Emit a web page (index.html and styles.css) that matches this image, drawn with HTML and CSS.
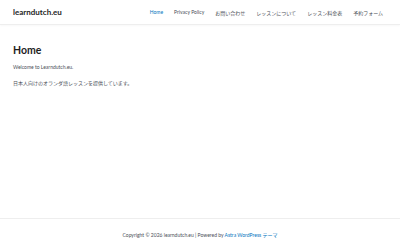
FILE: index.html
```html
<!DOCTYPE HTML>
<html lang="ja">
<head>
  <meta charset="utf-8">
  <title>learndutch.eu</title>
  <link rel="stylesheet" href="styles.css">
</head>
<body>
<div class="page">
  <header class="site-header">
    <a class="site-title" href="#">learndutch.eu</a>
    <nav class="main-nav">
      <a class="current" href="#">Home</a>
      <a href="#">Privacy Policy</a>
      <a href="#">お問い合わせ</a>
      <a href="#">レッスンについて</a>
      <a href="#">レッスン料金表</a>
      <a href="#">予約フォーム</a>
    </nav>
  </header>
  <main class="content">
    <h1>Home</h1>
    <p class="welcome">Welcome to Learndutch.eu.</p>
    <p class="intro">日本人向けのオランダ語レッスンを提供しています。</p>
  </main>
  <footer class="site-footer">
    <p>Copyright © 2026 learndutch.eu | Powered by <a href="#">Astra WordPress テーマ</a></p>
  </footer>
</div>
</body>
</html>
```

FILE: styles.css
```css
/*base*/
body{
	margin:0;
	padding:0;
	background:#fff;
	color:#4b4f58;
	font-family:Lato,"Noto Sans CJK JP",sans-serif;
}
a{color:#4b4f58;text-decoration:none}

.page{
	display:flex;
	flex-direction:column;
	height:250px;
}

/*1.header*/
.site-header{
	display:flex;
	align-items:center;
	justify-content:space-between;
	height:24px;
	padding:0 17px 0 13px;
	border-bottom:1px solid #eee;
	box-shadow:0 1px 2px rgba(0,0,0,0.03);
}
.site-title{
	font-size:8px;
	font-weight:700;
	color:#1e1e1e;
}
.main-nav{
	display:flex;
	gap:11px;
	font-size:5px;
}
.main-nav a{color:#4b4f58;}
.main-nav a.current{color:#0274be;}

/*2.content*/
.content{
	flex:1;
	padding:19px 13px 0;
}
.content h1{
	margin:0 0 8px;
	font-size:10.5px;
	font-weight:700;
	color:#1e1e1e;
}
.content p{
	margin:0;
	font-size:5px;
}
.welcome{margin-bottom:9px !important;}

/*3.footer*/
.site-footer{
	height:31px;
	border-top:1px solid #eee;
	display:flex;
	align-items:center;
	justify-content:center;
}
.site-footer p{
	margin:0;
	font-size:5px;
}
.site-footer a{color:#0274be;}
```
